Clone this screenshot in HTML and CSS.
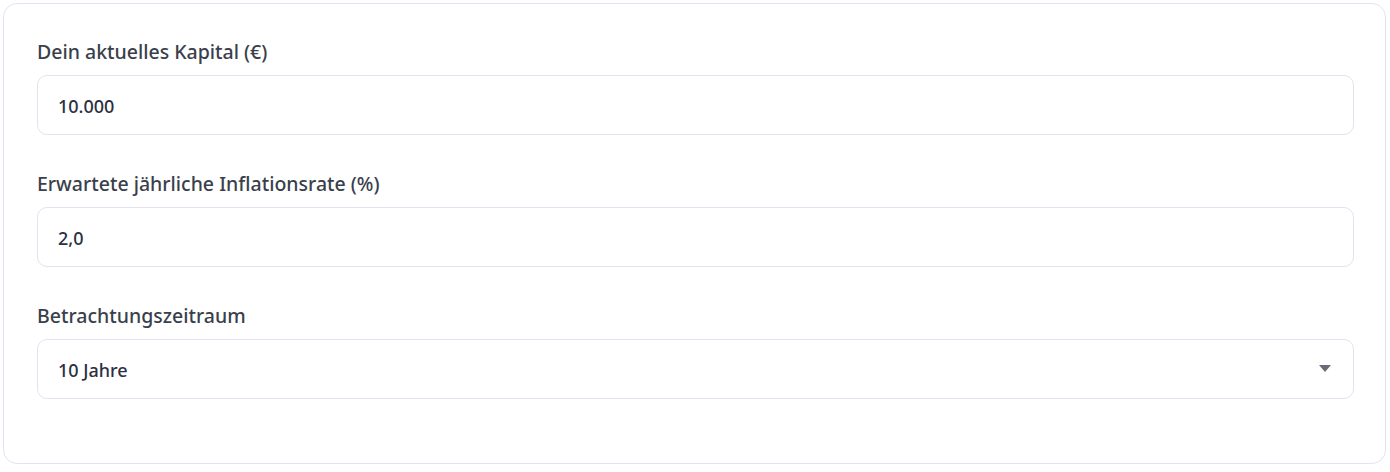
FILE: index.html
```html
<!DOCTYPE html>
<html lang="de">
<head>
<meta charset="utf-8">
<link rel="stylesheet" href="styles.css">
</head>
<body>
<div class="card">
  <div class="field">
    <label class="label" for="kapital">Dein aktuelles Kapital (€)</label>
    <input class="control" id="kapital" type="text" value="10.000">
  </div>
  <div class="field">
    <label class="label" for="inflation">Erwartete jährliche Inflationsrate (%)</label>
    <input class="control" id="inflation" type="text" value="2,0">
  </div>
  <div class="field">
    <label class="label" for="zeitraum">Betrachtungszeitraum</label>
    <div class="select-wrap">
      <select class="control select" id="zeitraum">
        <option>10 Jahre</option>
      </select>
      <svg class="arrow" width="12" height="7" viewBox="0 0 12 7"><path d="M0 0h12L6 7z" fill="#6b6b78"/></svg>
    </div>
  </div>
</div>
</body>
</html>
```
FILE: styles.css
```css
html, body {
  margin: 0;
  padding: 0;
  background: #ffffff;
}
body {
  padding: 3px 4px 0 3px;
  font-family: "Noto Sans", "Open Sans", sans-serif;
}
.card {
  border: 1px solid #e3e3f0;
  border-radius: 14px;
  background: #ffffff;
  padding: 36px 31px 64px 33px;
  display: flex;
  flex-direction: column;
  gap: 37px;
}
.field {
  display: flex;
  flex-direction: column;
}
.label {
  font-size: 19.5px;
  line-height: 24px;
  font-weight: 500;
  color: #3a3f4c;
  margin-bottom: 11px;
}
.control {
  box-sizing: border-box;
  height: 60px;
  width: 100%;
  border: 1px solid #e3e3f0;
  border-radius: 10px;
  background: #ffffff;
  padding: 2px 20px 0;
  font-family: inherit;
  font-size: 18px;
  font-weight: 500;
  color: #2b2f42;
  outline: none;
  margin: 0;
}
.select-wrap {
  position: relative;
}
.select {
  appearance: none;
  -webkit-appearance: none;
}
.arrow {
  position: absolute;
  right: 23px;
  top: 26px;
  pointer-events: none;
}
```
